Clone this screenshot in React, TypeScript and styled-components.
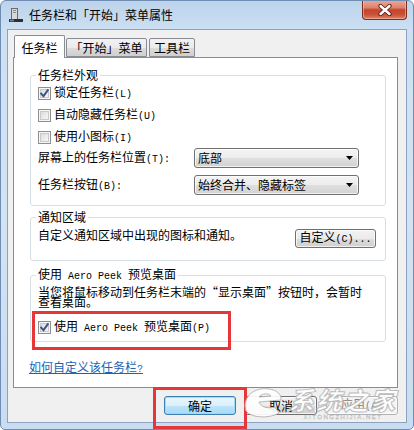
import React from "react";
import styled, { createGlobalStyle } from "styled-components";

const GlobalStyle = createGlobalStyle`
  html, body { margin: 0; padding: 0; background: #ffffff; }
  body {
    font-family: "Noto Sans CJK SC", "Noto Sans", sans-serif;
    font-size: 12px;
    color: #000;
  }
  * { box-sizing: border-box; }
`;

const Window = styled.div`
  position: relative;
  width: 414px;
  height: 430px;
  display: flex;
  flex-direction: column;
  border: 1px solid #6f8db2;
  border-radius: 6px 6px 5px 5px;
  background: linear-gradient(180deg, #bcd3eb 0%, #cde0f3 7%, #d3e3f4 50%, #cadcef 100%);
  overflow: hidden;
`;

const TitleBar = styled.div`
  height: 28px;
  flex: none;
  display: flex;
  align-items: center;
  padding-left: 7px;
`;

const TitleText = styled.span`
  margin-left: 5px;
  font-size: 12px;
  color: #000;
  line-height: 14px;
`;

const CloseButton = styled.div`
  align-self: flex-start;
  margin-left: auto;
  margin-right: 6px;
  margin-top: -1px;
  width: 45px;
  height: 20px;
  border: 1px solid #7a2e22;
  border-top: none;
  border-radius: 0 0 4px 4px;
  background: linear-gradient(180deg, #e9ab9c 0%, #dd836d 40%, #c5452d 52%, #c94f35 75%, #df8266 100%);
  box-shadow: inset 0 0 0 1px rgba(255, 220, 210, 0.45);
  display: flex;
  align-items: center;
  justify-content: center;
`;

const Client = styled.div`
  flex: 1;
  margin: 0 6px 6px 6px;
  border: 1px solid #8ca2bf;
  background: #f0f0f0;
  display: flex;
  flex-direction: column;
  padding: 5px 8px 0 5px;
`;

const TabStrip = styled.div`
  height: 22px;
  display: flex;
  align-items: flex-end;
  padding-left: 1px;
  position: relative;
  z-index: 1;
`;

const Tab = styled.div<{ $active?: boolean; $w: number }>`
  width: ${(p) => p.$w}px;
  height: ${(p) => (p.$active ? 23 : 19)}px;
  margin-bottom: ${(p) => (p.$active ? -1 : 0)}px;
  margin-right: ${(p) => (p.$active ? 1 : 2)}px;
  border: 1px solid #898c95;
  border-bottom: ${(p) => (p.$active ? "none" : "1px solid #898c95")};
  border-radius: 2px 2px 0 0;
  background: ${(p) =>
    p.$active
      ? "#ffffff"
      : "linear-gradient(180deg, #f2f2f2 0%, #ebebeb 50%, #dddddd 51%, #cfcfcf 100%)"};
  display: flex;
  justify-content: center;
  align-items: center;
  padding-top: 1px;
  font-size: 12px;
  line-height: 14px;
  white-space: nowrap;
`;

const Panel = styled.div`
  height: 331px;
  flex: none;
  background: #ffffff;
  border: 1px solid #898c95;
  display: flex;
  flex-direction: column;
  padding: 0 11px 0 16px;
`;

const Group = styled.fieldset<{ $top: number; $pb: number }>`
  margin: ${(p) => p.$top}px 0 0 0;
  padding: 0 9px ${(p) => p.$pb}px 7px;
  min-width: 0;
  border: 1px solid #d5dfe5;
  border-radius: 3px;
  display: flex;
  flex-direction: column;
`;

const Legend = styled.legend`
  padding: 0 2px;
  margin-left: -2px;
  font-size: 12px;
  line-height: 14px;
  white-space: pre;
`;

const Lt = styled.span`
  font-family: "Liberation Mono", monospace;
  font-size: 10px;
`;

const Label = styled.span`
  white-space: pre;
  line-height: 14px;
`;

const CheckRow = styled.div<{ $highlight?: boolean; $mt?: number }>`
  position: relative;
  height: 22px;
  margin-top: ${(p) => p.$mt ?? 0}px;
  display: flex;
  align-items: center;

  ${(p) =>
    p.$highlight
      ? `&::after {
      content: "";
      position: absolute;
      left: -6px;
      top: -5px;
      width: 193px;
      height: 33px;
      border: 3px solid #e5373a;
      pointer-events: none;
    }`
      : ""}
`;

const Box = styled.span`
  width: 13px;
  height: 13px;
  flex: none;
  margin-right: 3px;
  border: 1px solid #8f8f8f;
  background: linear-gradient(135deg, #d6d6d6 0%, #eeeeee 60%, #fafafa 100%);
  box-shadow: inset 0 0 0 1px #f6f6f6, inset 0 0 0 2px #c9c9c9;
  display: flex;
  align-items: center;
  justify-content: center;
`;

const SelectRow = styled.div<{ $mt: number }>`
  margin-top: ${(p) => p.$mt}px;
  display: grid;
  grid-template-columns: 156px 165px;
  align-items: center;
  height: 20px;
  white-space: nowrap;
  line-height: 14px;
`;

const Select = styled.div`
  height: 20px;
  border: 1px solid #707070;
  border-radius: 3px;
  background: linear-gradient(180deg, #f4f4f4 0%, #ececec 50%, #dfdfdf 51%, #d2d2d2 100%);
  box-shadow: inset 0 0 0 1px rgba(255, 255, 255, 0.7);
  display: flex;
  align-items: center;
  padding: 0 5px 0 3px;
  line-height: 14px;
`;

const SelectText = styled.span`
  flex: 1;
  white-space: nowrap;
`;

const NotifyRow = styled.div`
  display: flex;
  justify-content: space-between;
  align-items: flex-start;
`;

const NotifyText = styled.span`
  margin-top: 4px;
  line-height: 14px;
  white-space: nowrap;
`;

const Button = styled.div<{ $w: number; $kind?: "default" | "disabled" | "normal" }>`
  width: ${(p) => p.$w}px;
  height: 19px;
  flex: none;
  border: 1px solid
    ${(p) => (p.$kind === "default" ? "#3c7fb1" : p.$kind === "disabled" ? "#adb2b5" : "#707070")};
  border-radius: 3px;
  background: ${(p) =>
    p.$kind === "default"
      ? "linear-gradient(180deg, #eaf6fd 0%, #d9f0fc 50%, #bee6fd 51%, #a7d9f5 100%)"
      : p.$kind === "disabled"
      ? "#f4f4f4"
      : "linear-gradient(180deg, #f2f2f2 0%, #ebebeb 50%, #dddddd 51%, #cfcfcf 100%)"};
  box-shadow: inset 0 0 0 1px
    ${(p) => (p.$kind === "default" ? "rgba(150, 220, 250, 0.9)" : "rgba(255, 255, 255, 0.7)")};
  color: ${(p) => (p.$kind === "disabled" ? "#838383" : "#000")};
  display: flex;
  align-items: center;
  justify-content: center;
  line-height: 14px;
  white-space: nowrap;
`;

const NotifyButton = styled(Button)`
  margin-top: 5px;
`;

const Desc = styled.div`
  margin-top: 3px;
  line-height: 10px;
  white-space: nowrap;
`;

const HelpLink = styled.a`
  margin-top: 18px;
  margin-left: -1px;
  align-self: flex-start;
  color: #1a64b5;
  text-decoration: underline;
  line-height: 14px;
  cursor: pointer;
`;

const ButtonRow = styled.div`
  margin-top: 8px;
  display: flex;
  justify-content: flex-end;
  gap: 9px;
`;

const Highlight = styled.div`
  position: relative;
  display: flex;
  &::after {
    content: "";
    position: absolute;
    left: -11px;
    top: -9px;
    width: 88px;
    height: 36px;
    border: 3px solid #e5373a;
    pointer-events: none;
  }
`;

const Watermark = styled.div`
  position: absolute;
  left: 240px;
  top: 383px;
  display: flex;
  align-items: flex-start;
  gap: 4px;
  opacity: 0.92;
  pointer-events: none;
`;

const WatermarkText = styled.div`
  display: flex;
  flex-direction: column;
  align-items: center;
`;

const WatermarkTitle = styled.span`
  font-family: "Noto Sans CJK SC", sans-serif;
  font-size: 25px;
  font-weight: 900;
  line-height: 30px;
  letter-spacing: 2px;
  color: #ffffff;
  -webkit-text-stroke: 1px #b9b9b9;
  font-style: italic;
`;

const WatermarkSub = styled.span`
  font-family: "Liberation Sans", sans-serif;
  font-size: 6px;
  line-height: 7px;
  letter-spacing: 1.5px;
  color: #ffffff;
  -webkit-text-stroke: 0.3px #aaaaaa;
`;

const ArrowIcon = () => (
  <svg width="7" height="4" viewBox="0 0 7 4">
    <path d="M0 0 H7 L3.5 4 Z" fill="#000" />
  </svg>
);

const Check = ({ checked }: { checked?: boolean }) => (
  <Box>
    {checked && (
      <svg width="9" height="9" viewBox="0 0 9 9">
        <path d="M1.2 4.6 L3.5 7.2 L7.8 1.2" fill="none" stroke="#3f5486" strokeWidth="2" strokeLinecap="square" />
      </svg>
    )}
  </Box>
);

const TaskbarIcon = () => (
  <svg width="16" height="16" viewBox="0 0 16 16">
    <rect x="3.5" y="1.5" width="6" height="11" fill="#d8d8d8" stroke="#6b6b6b" />
    <rect x="5" y="3" width="3" height="1" fill="#8a8a8a" />
    <rect x="5" y="5" width="3" height="1" fill="#8a8a8a" />
    <rect x="1" y="12" width="14" height="3" fill="#2f2f2f" />
    <rect x="2" y="12.5" width="4" height="2" fill="#5a7fa8" />
  </svg>
);

const CloseGlyph = () => (
  <svg width="14" height="12" viewBox="0 0 14 12">
    <path d="M2.5 2 L11.5 10 M11.5 2 L2.5 10" stroke="#5a1d14" strokeWidth="4.2" strokeLinecap="round" />
    <path d="M2.5 2 L11.5 10 M11.5 2 L2.5 10" stroke="#ffffff" strokeWidth="2.4" strokeLinecap="round" />
  </svg>
);

const WatermarkLogo = () => (
  <svg width="44" height="36" viewBox="0 0 44 36">
    <path
      d="M4 22 C4 10 16 3 28 5 C36 6 41 11 40 16 L18 18 C20 23 26 25 34 23 L38 29 C28 35 10 34 5 27 Z M18 13 L30 12 C28 9 21 9 18 13 Z"
      fill="#ffffff"
      stroke="#b5b5b5"
      strokeWidth="1"
      fillRule="evenodd"
    />
  </svg>
);

export default function App() {
  return (
    <>
      <GlobalStyle />
      <Window>
        <TitleBar>
          <TaskbarIcon />
          <TitleText>任务栏和「开始」菜单属性</TitleText>
          <CloseButton>
            <CloseGlyph />
          </CloseButton>
        </TitleBar>
        <Client>
          <TabStrip>
            <Tab $active $w={51}>任务栏</Tab>
            <Tab $w={81}>「开始」菜单</Tab>
            <Tab $w={46}>工具栏</Tab>
          </TabStrip>
          <Panel>
            <Group $top={10} $pb={10}>
              <Legend>任务栏外观</Legend>
              <CheckRow>
                <Check checked />
                <Label>
                  锁定任务栏<Lt>(L)</Lt>
                </Label>
              </CheckRow>
              <CheckRow>
                <Check />
                <Label>
                  自动隐藏任务栏<Lt>(U)</Lt>
                </Label>
              </CheckRow>
              <CheckRow>
                <Check />
                <Label>
                  使用小图标<Lt>(I)</Lt>
                </Label>
              </CheckRow>
              <SelectRow $mt={0}>
                <Label>
                  屏幕上的任务栏位置<Lt>(T):</Lt>
                </Label>
                <Select>
                  <SelectText>底部</SelectText>
                  <ArrowIcon />
                </Select>
              </SelectRow>
              <SelectRow $mt={7}>
                <Label>
                  任务栏按钮<Lt>(B):</Lt>
                </Label>
                <Select>
                  <SelectText>始终合并、隐藏标签</SelectText>
                  <ArrowIcon />
                </Select>
              </SelectRow>
            </Group>

            <Group $top={4} $pb={12}>
              <Legend>通知区域</Legend>
              <NotifyRow>
                <NotifyText>自定义通知区域中出现的图标和通知。</NotifyText>
                <NotifyButton $w={81}>
                  <Label>
                    自定义<Lt>(C)...</Lt>
                  </Label>
                </NotifyButton>
              </NotifyRow>
            </Group>

            <Group $top={6} $pb={3}>
              <Legend>
                使用<Lt> Aero Peek </Lt>预览桌面
              </Legend>
              <Desc>
                当您将鼠标移动到任务栏末端的“显示桌面”按钮时，会暂时
                <br />
                查看桌面。
              </Desc>
              <CheckRow $highlight $mt={9}>
                <Check checked />
                <Label>
                  使用<Lt> Aero Peek </Lt>预览桌面<Lt>(P)</Lt>
                </Label>
              </CheckRow>
            </Group>

            <HelpLink>
              如何自定义该任务栏<Lt>?</Lt>
            </HelpLink>
          </Panel>
          <ButtonRow>
            <Highlight>
              <Button $w={72} $kind="default">确定</Button>
            </Highlight>
            <Button $w={72} $kind="normal">取消</Button>
            <Button $w={72} $kind="disabled">
              <Label>
                应用<Lt>(A)</Lt>
              </Label>
            </Button>
          </ButtonRow>
        </Client>
        <Watermark>
          <WatermarkLogo />
          <WatermarkText>
            <WatermarkTitle>系统之家</WatermarkTitle>
            <WatermarkSub>XITONGZHIJIA.NET</WatermarkSub>
          </WatermarkText>
        </Watermark>
      </Window>
    </>
  );
}
